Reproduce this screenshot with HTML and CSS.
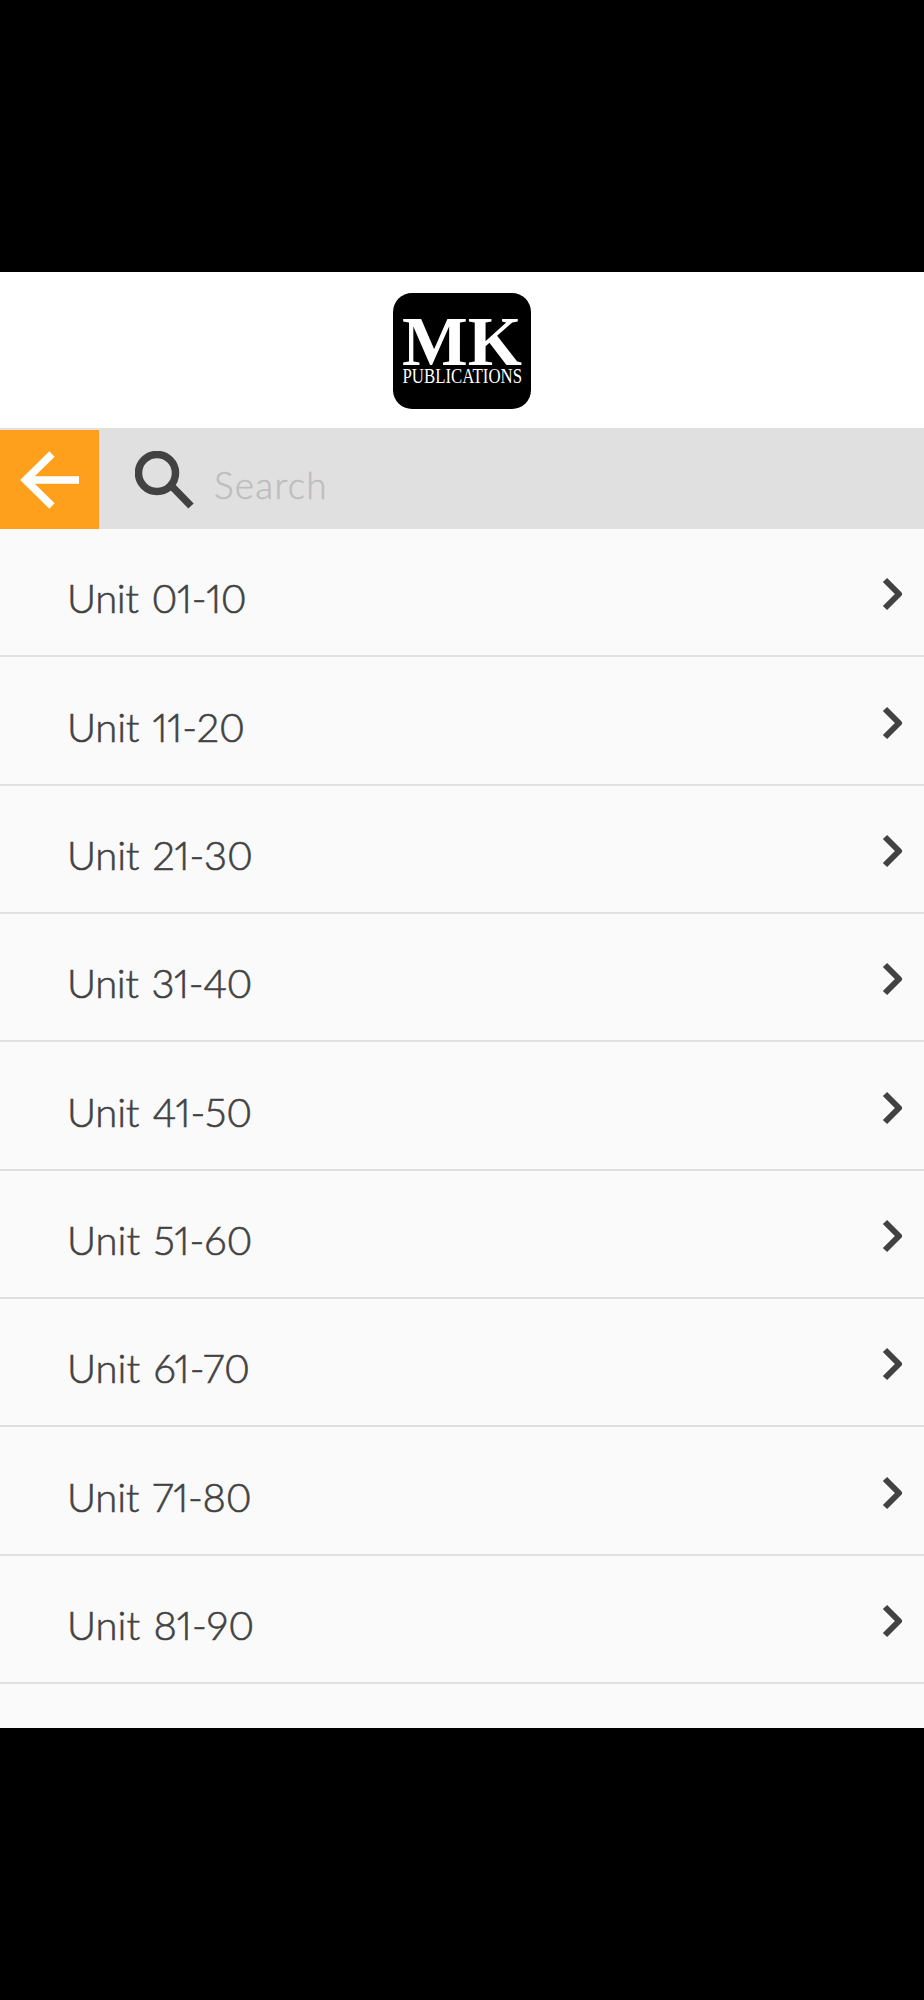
FILE: index.html
```html
<!DOCTYPE html>
<html lang="en">
<head>
<meta charset="utf-8">
<meta name="viewport" content="width=device-width">
<title>MK Publications</title>
<link rel="stylesheet" href="styles.css">
</head>
<body>
<main class="app">
  <header class="header">
    <svg class="logo" viewBox="0 0 138 116" role="img" aria-label="MK Publications">
      <rect width="138" height="116" rx="19"/>
      <text class="logo-mark" x="9" y="72" textLength="120" lengthAdjust="spacingAndGlyphs">MK</text>
      <text class="logo-name" x="9.500" y="90" textLength="119.500" lengthAdjust="spacingAndGlyphs">PUBLICATIONS</text>
    </svg>
  </header>
  <div class="toolbar">
    <button class="back" aria-label="Back">
      <svg viewBox="0 0 59 58"><path d="M32 3 5.500 29 32 55M6 29H59"/></svg>
    </button>
    <label class="search">
      <svg class="lens" width="60" height="60" viewBox="0 0 60 60"><circle cx="22" cy="22" r="18.5"/><path d="M35.500 35.500 38.500 37 56 55"/></svg>
      <input type="text" placeholder="Search">
    </label>
  </div>
  <ul class="list">
    <li class="row"><span class="name tight">Unit 01-10</span><svg class="chevron" viewBox="0 0 22 34"><path d="M3 3 17 17 3 31"/></svg></li>
    <li class="row"><span class="name">Unit 11-20</span><svg class="chevron" viewBox="0 0 22 34"><path d="M3 3 17 17 3 31"/></svg></li>
    <li class="row"><span class="name">Unit 21-30</span><svg class="chevron" viewBox="0 0 22 34"><path d="M3 3 17 17 3 31"/></svg></li>
    <li class="row"><span class="name tight">Unit 31-40</span><svg class="chevron" viewBox="0 0 22 34"><path d="M3 3 17 17 3 31"/></svg></li>
    <li class="row"><span class="name">Unit 41-50</span><svg class="chevron" viewBox="0 0 22 34"><path d="M3 3 17 17 3 31"/></svg></li>
    <li class="row"><span class="name wide">Unit 51-60</span><svg class="chevron" viewBox="0 0 22 34"><path d="M3 3 17 17 3 31"/></svg></li>
    <li class="row"><span class="name wide">Unit 61-70</span><svg class="chevron" viewBox="0 0 22 34"><path d="M3 3 17 17 3 31"/></svg></li>
    <li class="row"><span class="name">Unit 71-80</span><svg class="chevron" viewBox="0 0 22 34"><path d="M3 3 17 17 3 31"/></svg></li>
    <li class="row"><span class="name wide">Unit 81-90</span><svg class="chevron" viewBox="0 0 22 34"><path d="M3 3 17 17 3 31"/></svg></li>
  </ul>
</main>
</body>
</html>
```
FILE: styles.css
```css
* { box-sizing: border-box; }
body { margin: 0; padding: 272px 0; height: 2000px; background: #000; font-family: Lato, sans-serif; }
.app { height: 1456px; background: #fafafa; overflow: hidden; }
.header { height: 156px; background: #fff; display: flex; justify-content: center; padding-top: 21px; }
.logo { width: 138px; height: 116px; overflow: visible; }
.logo text { fill: #fff; font-family: "Liberation Serif", serif; }
.logo-mark { font-size: 70px; font-weight: bold; }
.logo-name { font-size: 21px; }
.toolbar { height: 101px; background: #e0e0e0; display: flex; padding-top: 2px; }
.back { width: 99px; height: 99px; border: 0; padding: 21px 20px 20px; background: #ffa01c; }
.back svg { display: block; width: 59px; height: 58px; }
.back path { fill: none; stroke: #fff; stroke-width: 7.500; }
.search { display: flex; flex: 1; padding: 20px 0 0 36px; }
.lens { flex: none; margin-top: 1px; fill: none; stroke: #424242; stroke-width: 7.500; }
.search input { width: 400px; height: 70px; border: 0; padding: 0; margin-left: 19px; background: transparent; font: 300 37px/70px Lato, sans-serif; letter-spacing: 1.2px; outline: 0; }
.search input::placeholder { color: #bdbdbd; opacity: 1; -webkit-text-stroke: .4px #bdbdbd; }
.list { list-style: none; margin: 0; padding: 0; }
.row { height: 128.35px; display: flex; justify-content: space-between; align-items: center; padding: 0 20px 0 67px; border-bottom: 2px solid #e0e0e0; }
.name { font-size: 40px; font-weight: 300; line-height: 48px; letter-spacing: -.2px; word-spacing: 2.500px; color: #424242; padding-top: 12px; font-feature-settings: "pnum"; -webkit-text-stroke: .6px #424242; }
.tight { letter-spacing: -.4px; }
.wide { letter-spacing: 0; }
.chevron { width: 22px; height: 34px; fill: none; stroke: #424242; stroke-width: 6; stroke-linejoin: round; margin-top: 4px; }
```
